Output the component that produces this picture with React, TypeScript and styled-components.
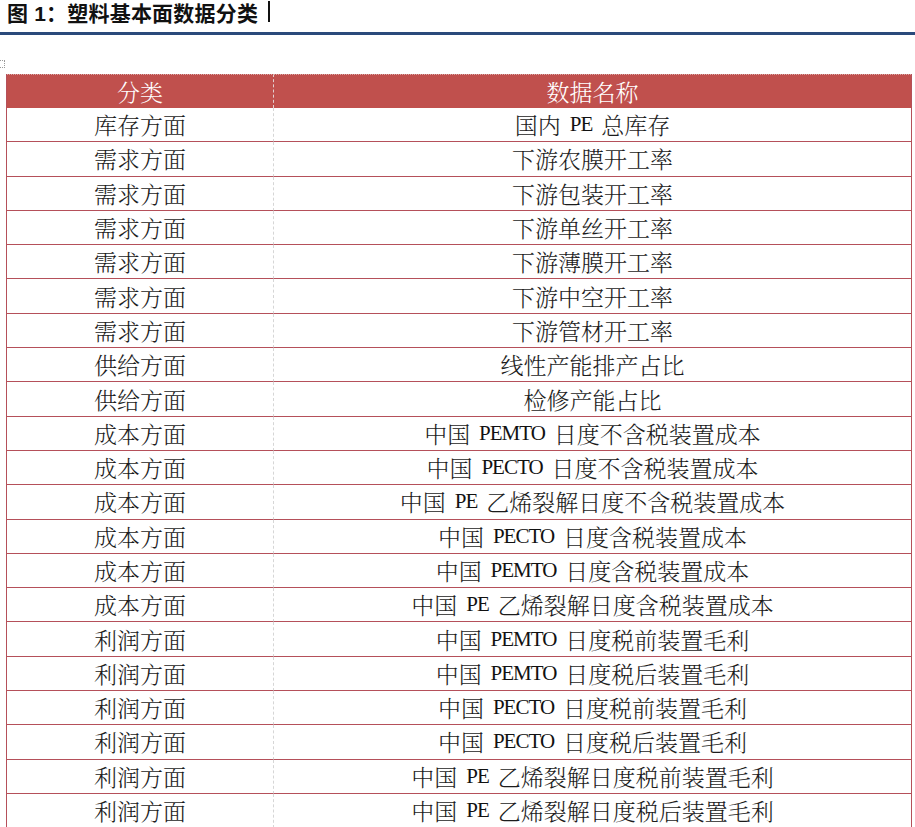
import { FC } from "react";
import { styled, createGlobalStyle } from "styled-components";

const rows: [string, string][] = [
  ["库存方面", "国内 PE 总库存"],
  ["需求方面", "下游农膜开工率"],
  ["需求方面", "下游包装开工率"],
  ["需求方面", "下游单丝开工率"],
  ["需求方面", "下游薄膜开工率"],
  ["需求方面", "下游中空开工率"],
  ["需求方面", "下游管材开工率"],
  ["供给方面", "线性产能排产占比"],
  ["供给方面", "检修产能占比"],
  ["成本方面", "中国 PEMTO 日度不含税装置成本"],
  ["成本方面", "中国 PECTO 日度不含税装置成本"],
  ["成本方面", "中国 PE 乙烯裂解日度不含税装置成本"],
  ["成本方面", "中国 PECTO 日度含税装置成本"],
  ["成本方面", "中国 PEMTO 日度含税装置成本"],
  ["成本方面", "中国 PE 乙烯裂解日度含税装置成本"],
  ["利润方面", "中国 PEMTO 日度税前装置毛利"],
  ["利润方面", "中国 PEMTO 日度税后装置毛利"],
  ["利润方面", "中国 PECTO 日度税前装置毛利"],
  ["利润方面", "中国 PECTO 日度税后装置毛利"],
  ["利润方面", "中国 PE 乙烯裂解日度税前装置毛利"],
  ["利润方面", "中国 PE 乙烯裂解日度税后装置毛利"],
];

const GlobalStyle = createGlobalStyle`
  body {
    margin: 0;
    background: #ffffff;
    font-family: "Liberation Sans", "Noto Sans CJK SC", sans-serif;
  }
`;

// latin words are narrow serif caps in the source, give them their own span
const renderText = (text: string) =>
  text.split(/([A-Za-z]+)/).map((part, i) =>
    /[A-Za-z]/.test(part) ? <Latin key={i}>{part}</Latin> : part
  );

const App: FC = () => {
  return (
    <Page>
      <GlobalStyle />
      <TitleBar>
        <Title>图 1：塑料基本面数据分类</Title>
        <Cursor />
      </TitleBar>
      <Handle />
      <Table>
        <HeadCell $first>分类</HeadCell>
        <HeadCell>数据名称</HeadCell>
        {rows.map(([kind, name], i) => (
          <Row key={i}>
            <Cell $first>{kind}</Cell>
            <Cell>{renderText(name)}</Cell>
          </Row>
        ))}
      </Table>
    </Page>
  );
};

const Page = styled.div`
  width: 915px;
  height: 827px;
  overflow: hidden;
  position: relative;
`;

const TitleBar = styled.div`
  display: flex;
  align-items: center;
  box-sizing: border-box;
  height: 35px;
  padding-left: 7px;
  padding-bottom: 9px;
  border-bottom: 3px solid #2a4a7b;
`;

const Title = styled.div`
  font-size: 21px;
  font-weight: 700;
  color: #111111;
  letter-spacing: 0.2px;
`;

const Cursor = styled.span`
  display: inline-block;
  width: 2px;
  height: 21px;
  margin-left: 10px;
  background: #111111;
`;

const Handle = styled.div`
  position: absolute;
  left: 0;
  top: 60px;
  width: 4px;
  height: 6px;
  border: 1px dotted #9a9a9a;
  border-left: none;
`;

const Table = styled.div`
  display: grid;
  grid-template-columns: 267px 1fr;
  margin: 39px 3px 0 6px;
  border-left: 1px solid #b5505a;
  border-right: 1px solid #b5505a;
  font-family: "Noto Serif CJK SC", "Noto Sans CJK SC", "Liberation Serif", serif;
  font-size: 23px;
  font-weight: 300;
  color: #1c1c1c;
`;

const HeadCell = styled.div<{ $first?: boolean }>`
  height: 34px;
  display: flex;
  align-items: center;
  justify-content: center;
  background: #c0504d;
  color: #ffffff;
  border-top: 1px dotted #d8a8a6;
  box-sizing: border-box;
  border-right: ${(p) => (p.$first ? "1px dashed #e2d0d0" : "none")};
`;

const Row = styled.div`
  display: contents;
`;

const Cell = styled.div<{ $first?: boolean }>`
  height: 34.3px;
  display: flex;
  align-items: center;
  justify-content: center;
  box-sizing: border-box;
  border-bottom: 1px solid #b5505a;
  border-right: ${(p) => (p.$first ? "1px dashed #d6d6d6" : "none")};
  white-space: pre;
`;

const Latin = styled.span`
  margin: 0 3px;
  font-family: "Liberation Serif", serif;
  font-size: 21px;
  font-weight: 400;
  letter-spacing: -1px;
  color: #111111;
`;

export default App;
